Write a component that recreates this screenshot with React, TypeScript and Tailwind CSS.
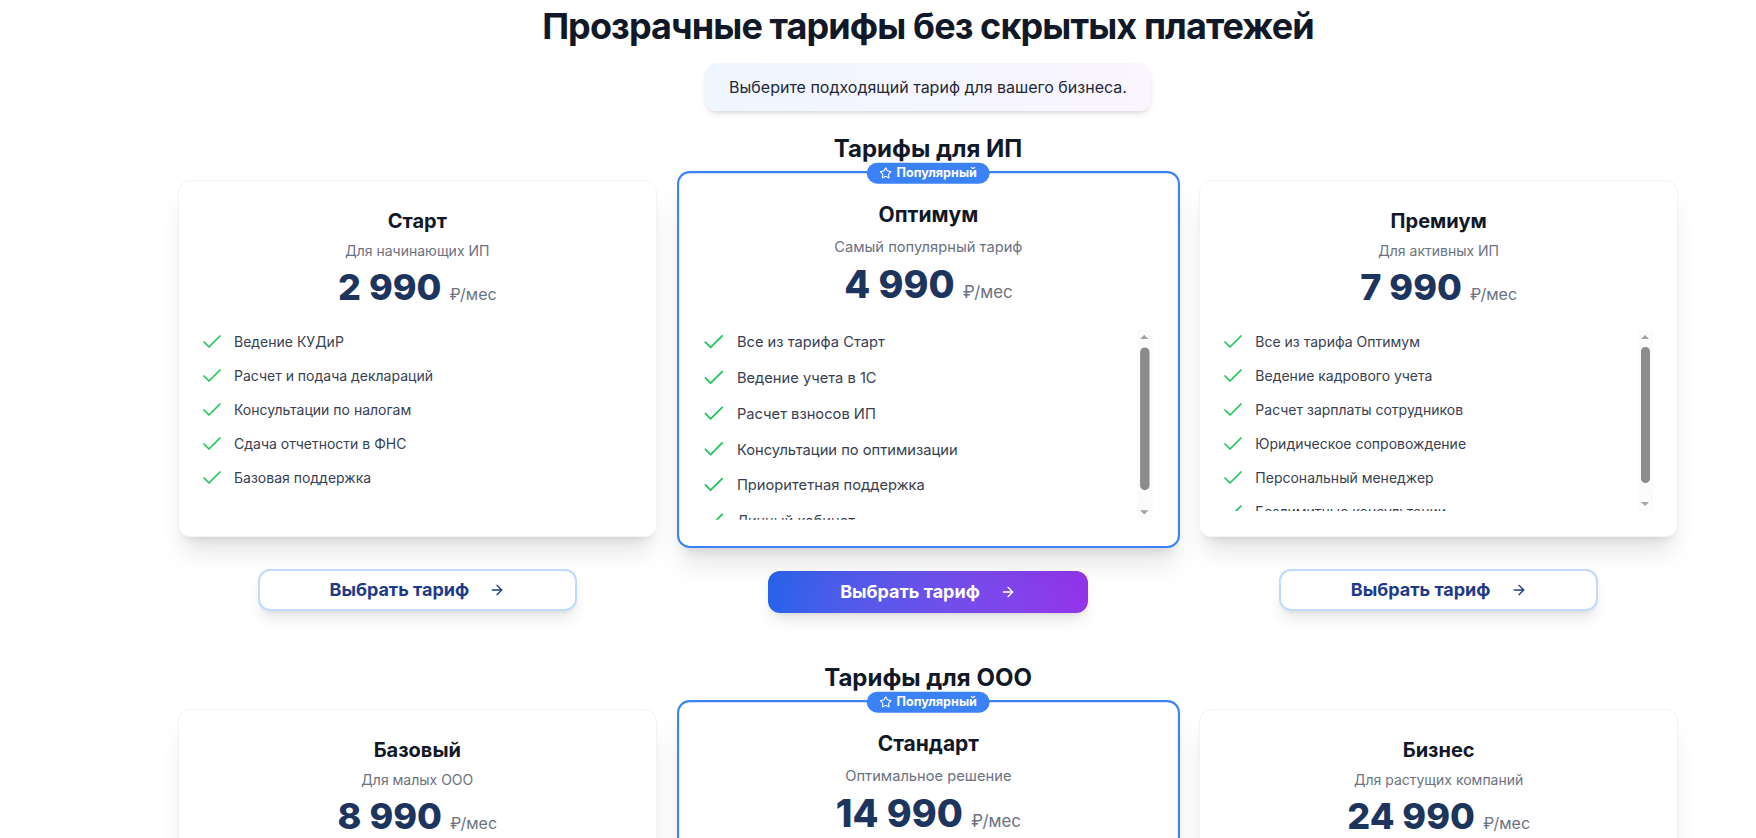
import { Check, Star, ArrowRight } from "lucide-react";
import clsx from "clsx";

type Plan = {
    name: string;
    note: string;
    price: string;
    features: string[];
    popular?: boolean;
};

const ipPlans: Plan[] = [
    {
        name: "Старт",
        note: "Для начинающих ИП",
        price: "2 990",
        features: [
            "Ведение КУДиР",
            "Расчет и подача деклараций",
            "Консультации по налогам",
            "Сдача отчетности в ФНС",
            "Базовая поддержка",
        ],
    },
    {
        name: "Оптимум",
        note: "Самый популярный тариф",
        price: "4 990",
        popular: true,
        features: [
            "Все из тарифа Старт",
            "Ведение учета в 1С",
            "Расчет взносов ИП",
            "Консультации по оптимизации",
            "Приоритетная поддержка",
            "Личный кабинет",
        ],
    },
    {
        name: "Премиум",
        note: "Для активных ИП",
        price: "7 990",
        features: [
            "Все из тарифа Оптимум",
            "Ведение кадрового учета",
            "Расчет зарплаты сотрудников",
            "Юридическое сопровождение",
            "Персональный менеджер",
            "Безлимитные консультации",
        ],
    },
];

const oooPlans: Plan[] = [
    {
        name: "Базовый",
        note: "Для малых ООО",
        price: "8 990",
        features: [
            "Ведение бухгалтерского учета",
            "Сдача отчетности",
            "Расчет налогов",
            "Консультации бухгалтера",
            "Базовая поддержка",
        ],
    },
    {
        name: "Стандарт",
        note: "Оптимальное решение",
        price: "14 990",
        popular: true,
        features: [
            "Все из тарифа Базовый",
            "Ведение учета в 1С",
            "Расчет зарплаты",
            "Кадровый учет",
            "Приоритетная поддержка",
            "Личный кабинет",
        ],
    },
    {
        name: "Бизнес",
        note: "Для растущих компаний",
        price: "24 990",
        features: [
            "Все из тарифа Стандарт",
            "Юридическое сопровождение",
            "Налоговое планирование",
            "Персональный менеджер",
            "Управленческая отчетность",
            "Безлимитные консультации",
        ],
    },
];

// the list is cut to 5 rows; longer lists get a grey scrollbar drawn beside them
function ScrollBar() {
    return (
        <div className="flex w-[15px] shrink-0 flex-col bg-[#fbfbfb]">
            <div className="flex h-[14px] items-center justify-center">
                <div className="h-0 w-0 border-x-[4px] border-b-[4px] border-x-transparent border-b-[#a3a3a3]" />
            </div>
            <div className="flex-1 px-[3px] pt-[3px]">
                <div className="h-[136px] rounded-full bg-[#8c8c8c]" />
            </div>
            <div className="flex h-[14px] items-center justify-center">
                <div className="h-0 w-0 border-x-[4px] border-t-[4px] border-x-transparent border-t-[#a3a3a3]" />
            </div>
        </div>
    );
}

function PlanCard({ plan }: { plan: Plan }) {
    const scrolls = plan.features.length > 5;
    return (
        <div className="flex flex-col">
            <div
                className={clsx(
                    "relative rounded-xl bg-white px-6 pt-[26px] pb-[25px] shadow-xl",
                    plan.popular ? "scale-105 border-2 border-[#3b82f6]" : "border border-gray-100"
                )}
            >
                {plan.popular && (
                    <span className="absolute left-1/2 top-0 flex -translate-x-1/2 -translate-y-1/2 items-center gap-1 rounded-full bg-[#3b82f6] px-3 py-0.5 text-xs font-bold text-white">
                        <Star className="h-3 w-3" strokeWidth={2} />
                        Популярный
                    </span>
                )}
                <div className="text-center">
                    <h3 className="text-xl leading-7 font-bold text-[#111827]">{plan.name}</h3>
                    <p className="mt-1.5 text-sm text-[#6b7280]">{plan.note}</p>
                    <div className="mt-1.5 flex items-baseline justify-center">
                        <span className="text-4xl leading-10 font-extrabold text-[#1d355e]">{plan.price}</span>
                        <span className="ml-2 text-base text-[#6b7280]">₽/мес</span>
                    </div>
                </div>
                <div className="mt-[23px] flex h-[181px]">
                    <ul className="-ml-[3px] flex-1 space-y-[10px] overflow-hidden">
                        {plan.features.map((f) => (
                            <li key={f} className="flex items-center gap-[10px]">
                                <Check className="h-6 w-6 shrink-0 text-[#22c55e]" strokeWidth={1.75} />
                                <span className="text-sm leading-5 text-[#374151]">{f}</span>
                            </li>
                        ))}
                    </ul>
                    {scrolls && <ScrollBar />}
                </div>
            </div>
            <button
                className={clsx(
                    "mx-auto mt-8 flex h-[42px] w-2/3 items-center justify-center rounded-xl text-lg font-bold shadow-lg",
                    plan.popular
                        ? "bg-gradient-to-r from-[#2563eb] to-[#9333ea] text-white"
                        : "border-2 border-[#bfdbfe] bg-white text-[#1e3a8a]"
                )}
            >
                Выбрать тариф
                <ArrowRight className="ml-5 h-4 w-4" strokeWidth={2} />
            </button>
        </div>
    );
}

function PlanSection({ title, plans, className }: { title: string; plans: Plan[]; className?: string }) {
    return (
        <section className={className}>
            <h2 className="mb-[15px] text-center text-2xl leading-8 font-bold text-[#111827]">{title}</h2>
            <div className="grid grid-cols-3 gap-8">
                {plans.map((p) => (
                    <PlanCard key={p.name} plan={p} />
                ))}
            </div>
        </section>
    );
}

export default function App() {
    return (
        <div className="min-h-screen bg-white pl-[100px] font-['Inter',sans-serif]">
            <div className="mx-auto max-w-[1500px] pt-[6px] pb-20">
                <h1 className="text-center text-4xl leading-10 font-bold tracking-tight text-[#111827]">
                    Прозрачные тарифы без скрытых платежей
                </h1>
                <div className="mt-[17px] flex justify-center">
                    <p className="rounded-xl bg-gradient-to-r from-[#eff6ff] to-[#faf5ff] px-6 py-3 text-base text-[#1f2937] shadow-md">
                        Выберите подходящий тариф для вашего бизнеса.
                    </p>
                </div>
                <PlanSection title="Тарифы для ИП" plans={ipPlans} className="mt-[22px]" />
                <PlanSection title="Тарифы для ООО" plans={oooPlans} className="mt-[49px]" />
            </div>
        </div>
    );
}
